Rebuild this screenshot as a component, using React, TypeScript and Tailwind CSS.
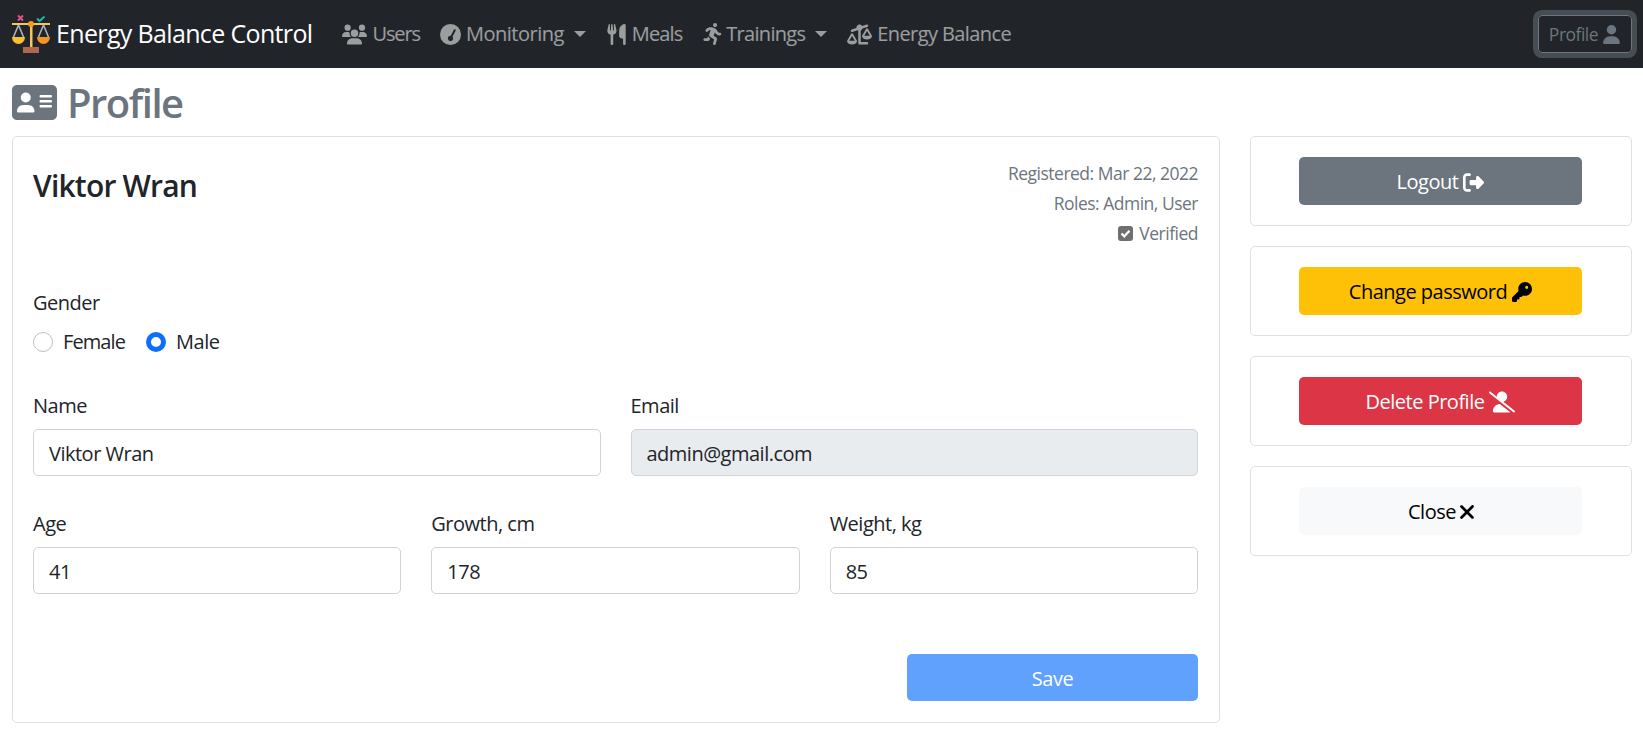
import React from "react";
import { FaUsers, FaGaugeSimpleHigh, FaUtensils, FaPersonRunning, FaScaleUnbalanced, FaUser, FaAddressCard, FaRightFromBracket, FaKey, FaUserSlash, FaXmark } from "react-icons/fa6";

function Logo() {
  return (
    <svg viewBox="0 0 38 38" className="w-[38px] h-[38px] shrink-0">
      <path d="M6 0.500l5 5M11 0.500l-5 5" stroke="#e8508c" strokeWidth="2" fill="none" />
      <path d="M25 3.500l2.500 2.500 5-4.500" stroke="#1fb5ad" strokeWidth="2" fill="none" />
      <path d="M6.500 10L1.500 22M6.500 10l5 12M31.500 10l-5 12M31.500 10l5 12" stroke="#aab2bb" strokeWidth="1.600" fill="none" />
      <rect x="0" y="8" width="38" height="2" fill="#f5c65a" />
      <rect x="18" y="9" width="2.500" height="24" fill="#f5c65a" />
      <circle cx="19" cy="9" r="3" fill="#f79a1e" />
      <path d="M0 22h13a6.500 7 0 0 1-13 0z" fill="#fbbf33" />
      <path d="M25 22h13a6.500 7 0 0 1-13 0z" fill="#f7941d" />
      <rect x="11" y="32" width="16" height="6" fill="#b0664f" />
    </svg>
  );
}

function NavItem({ icon, label, caret, labelClass = "" }: { icon: React.ReactNode; label: string; caret?: boolean; labelClass?: string }) {
  return (
    <a className="flex items-center gap-[5px] px-[10px] text-[20px] text-white/55">
      {icon}
      <span className={labelClass}>{label}</span>
      {caret && <span className="ml-[5px] border-t-[6px] border-x-[6px] border-x-transparent border-t-white/55" />}
    </a>
  );
}

function Field({ label, value, disabled }: { label: string; value: string; disabled?: boolean }) {
  return (
    <label className="block">
      <span className="block h-[30px] pt-[2px] mb-[10px] leading-[30px]">{label}</span>
      <input
        readOnly
        value={value}
        className={"block w-full h-[47px] px-[15px] pt-[2px] rounded-[5px] border border-[#ced4da] text-[20px] text-[#212529] outline-none " + (disabled ? "bg-[#e9ecef]" : "bg-white")}
      />
    </label>
  );
}

function Action({ label, icon, className }: { label: string; icon: React.ReactNode; className: string }) {
  return (
    <div className="h-[90px] border border-black/12 rounded-[5px] flex items-center justify-center">
      <button className={"w-[283px] h-[48px] pt-[2px] rounded-[5px] flex items-center justify-center gap-[5px] text-[20px] " + className}>
        <span>{label}</span>
        {icon}
      </button>
    </div>
  );
}

export default function App() {
  return (
    <div className="font-['Open_Sans',sans-serif] text-[#212529] text-[20px] tracking-[-0.5px]">
      <nav className="h-[68px] bg-[#212529] flex items-center pl-[12px] pr-[11px]">
        <a className="flex items-center gap-[6px] mr-[20px] text-[25px] text-white tracking-[-0.65px]">
          <Logo />
          <span>Energy Balance Control</span>
        </a>
        <NavItem icon={<FaUsers className="text-[25px]" />} label="Users" labelClass="tracking-[-1.1px]" />
        <NavItem icon={<FaGaugeSimpleHigh className="text-[21px]" />} label="Monitoring" caret />
        <NavItem icon={<FaUtensils className="text-[21px]" />} label="Meals" labelClass="tracking-[-0.9px]" />
        <NavItem icon={<FaPersonRunning className="text-[22px] -mr-[3px]" />} label="Trainings" labelClass="tracking-[-0.7px]" caret />
        <NavItem icon={<FaScaleUnbalanced className="text-[25px]" />} label="Energy Balance" labelClass="tracking-[-0.6px]" />
        <button className="ml-auto w-[94px] h-[38px] flex items-center justify-center gap-[4px] rounded-[4px] border border-[#6c757d] text-[#6c757d] text-[17.500px] shadow-[0_0_0_5px_rgba(108,117,125,0.5)]">
          <span>Profile</span>
          <FaUser className="text-[19px]" />
        </button>
      </nav>

      <main className="px-[12px]">
        <h2 className="h-[68px] pt-[2px] flex items-center gap-[10px] text-[40px] font-semibold text-[#6c757d] tracking-[-1.5px]">
          <FaAddressCard className="text-[45px] -mt-[2px]" />
          <span>Profile</span>
        </h2>
        <div className="grid grid-cols-[1207.500px_382px] gap-[30px]">
          <section className="h-[587px] border border-black/12 rounded-[5px] pl-[20px] pr-[20.500px] pt-[20px]">
            <div className="flex justify-between h-[105px]">
              <h4 className="text-[30px] font-semibold tracking-[-0.8px] mt-[9px] h-[40px] leading-[40px]">Viktor Wran</h4>
              <div className="text-right text-[17.500px] text-[#6c757d] leading-[30px] pt-[1px]">
                <div>Registered: Mar 22, 2022</div>
                <div>Roles: Admin, User</div>
                <div className="flex items-center justify-end gap-[6px]">
                  <svg viewBox="0 0 15 15" className="w-[15px] h-[15px]">
                    <rect width="15" height="15" rx="3" fill="#6f6f6f" />
                    <path d="M3.500 7.500l2.800 2.800 5.200-5.500" stroke="#fff" strokeWidth="2.200" fill="none" />
                  </svg>
                  <span>Verified</span>
                </div>
              </div>
            </div>
            <div className="mt-[26px] h-[30px] leading-[30px]">Gender</div>
            <div className="mt-[9px] h-[30px] flex items-center">
              <input type="radio" name="gender" readOnly className="appearance-none w-[20px] h-[20px] rounded-full border border-[#bfbfbf] bg-white" />
              <span className="ml-[10px] mr-[21px] tracking-[-0.9px]">Female</span>
              <input type="radio" name="gender" readOnly className="appearance-none w-[20px] h-[20px] rounded-full border-[5px] border-[#0d6efd] bg-white" />
              <span className="ml-[10px]">Male</span>
            </div>
            <div className="mt-[32px] grid grid-cols-2 gap-[30px]">
              <Field label="Name" value="Viktor Wran" />
              <Field label="Email" value="admin@gmail.com" disabled />
            </div>
            <div className="mt-[30.500px] grid grid-cols-3 gap-[30px]">
              <Field label="Age" value="41" />
              <Field label="Growth, cm" value="178" />
              <Field label="Weight, kg" value="85" />
            </div>
            <div className="mt-[60.500px] flex justify-end">
              <button className="w-[291px] h-[47px] pt-[2px] rounded-[5px] bg-[#0d6efd]/65 text-white text-[20px] font-medium">Save</button>
            </div>
          </section>
          <aside className="flex flex-col gap-[20px]">
            <Action label="Logout" icon={<FaRightFromBracket className="text-[21px]" />} className="bg-[#6c757d] text-white" />
            <Action label="Change password" icon={<FaKey className="text-[20px]" />} className="bg-[#ffc107] text-black" />
            <Action label="Delete Profile" icon={<FaUserSlash className="text-[26px]" />} className="bg-[#dc3545] text-white" />
            <Action label="Close" icon={<FaXmark className="text-[22px] -ml-[5px]" />} className="bg-[#f8f9fa] text-black pl-[5px]" />
          </aside>
        </div>
      </main>
    </div>
  );
}
